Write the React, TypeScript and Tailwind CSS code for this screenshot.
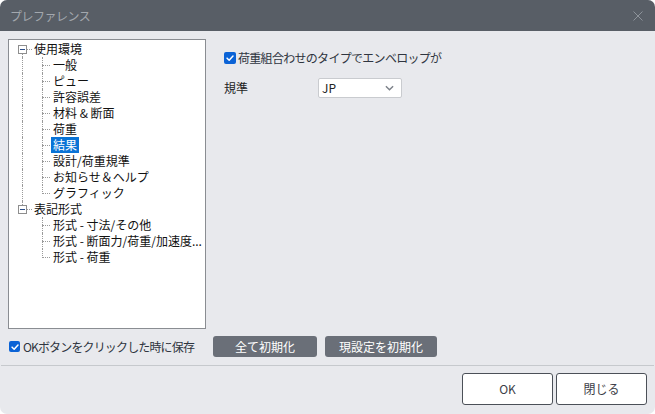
import { FC } from 'react';

type TreeItem = { label: string; children?: string[] };

const tree: TreeItem[] = [
  {
    label: '使用環境',
    children: ['一般', 'ピュー', '許容誤差', '材料 & 断面', '荷重', '結果', '設計/荷重規準', 'お知らせ＆ヘルプ', 'グラフィック'],
  },
  {
    label: '表記形式',
    children: ['形式 - 寸法/その他', '形式 - 断面力/荷重/加速度...', '形式 - 荷重'],
  },
];

const SELECTED = '結果';

const CheckBox: FC<{ size?: string }> = ({ size = 'w-[12px] h-[12px]' }) => (
  <span className={`${size} shrink-0 rounded-[2px] bg-[#0b63d6] flex items-center justify-center`}>
    <svg viewBox="0 0 12 12" className="w-[10px] h-[10px]" fill="none" stroke="white" strokeWidth={1.8} strokeLinecap="round" strokeLinejoin="round">
      <path d="M2.5 6.2 L5 8.6 L9.6 3.6" />
    </svg>
  </span>
);

const RootRow: FC<{ label: string; first: boolean; last: boolean }> = ({ label, first, last }) => (
  <div className="relative h-4 flex items-center pl-[25px]">
    {/* vertical connectors between root nodes */}
    {!first && <span className="absolute left-[13px] top-0 h-[4px] border-l border-dotted border-[#9a9a9a]" />}
    {!last && <span className="absolute left-[13px] top-[13px] h-[3px] border-l border-dotted border-[#9a9a9a]" />}
    <span className="absolute left-[9px] top-[4px] w-[9px] h-[9px] border border-[#8e8e8e] bg-white flex items-center justify-center">
      <span className="w-[5px] h-px bg-[#2d4f8a]" />
    </span>
    <span className="absolute left-[18px] top-[8px] w-[5px] border-t border-dotted border-[#9a9a9a]" />
    <span className="text-[12px] leading-4 text-[#111]">{label}</span>
  </div>
);

const ChildRow: FC<{ label: string; lastChild: boolean; rootContinues: boolean }> = ({ label, lastChild, rootContinues }) => {
  const selected = label === SELECTED;
  return (
    <div className="relative h-4 flex items-center pl-[42px]">
      {rootContinues && <span className="absolute left-[13px] top-0 h-4 border-l border-dotted border-[#9a9a9a]" />}
      <span className={`absolute left-[33px] top-0 border-l border-dotted border-[#9a9a9a] ${lastChild ? 'h-[9px]' : 'h-4'}`} />
      <span className="absolute left-[33px] top-[8px] w-[8px] border-t border-dotted border-[#9a9a9a]" />
      <span
        className={`text-[12px] leading-4 px-[2px] whitespace-nowrap ${
          selected ? 'bg-[#0a74d6] text-white' : 'text-[#111]'
        }`}
      >
        {label}
      </span>
    </div>
  );
};

export default function App() {
  return (
    <div
      className="w-[655px] h-[414px] bg-white"
      style={{ fontFamily: '"Noto Sans CJK JP", "Noto Sans", sans-serif' }}
    >
      <div className="w-full h-full rounded-[7px] overflow-hidden bg-[#e8e9ed] flex flex-col">
        {/* title bar */}
        <div className="h-[31px] shrink-0 bg-[#585e66] flex items-center justify-between pl-[10px] pr-[12px]">
          <span className="text-[12px] text-[#a3a8ae] tracking-[-0.5px]">プレファレンス</span>
          <svg viewBox="0 0 10 10" className="w-[10px] h-[10px]" stroke="#8d939a" strokeWidth={1}>
            <path d="M0.5 0.5 L9.5 9.5 M9.5 0.5 L0.5 9.5" />
          </svg>
        </div>

        {/* body */}
        <div className="flex pt-[8px] pl-[8px]">
          <div className="w-[198px] h-[290px] shrink-0 border border-[#8a8d92] bg-white pt-px">
            {tree.map((node, i) => (
              <div key={node.label}>
                <RootRow label={node.label} first={i === 0} last={i === tree.length - 1} />
                {node.children?.map((c, j) => (
                  <ChildRow
                    key={c}
                    label={c}
                    lastChild={j === node.children!.length - 1}
                    rootContinues={i < tree.length - 1}
                  />
                ))}
              </div>
            ))}
          </div>

          <div className="pl-[18px] pt-[13px] flex flex-col">
            <div className="flex items-center gap-[2px] h-[12px]">
              <CheckBox />
              <span className="text-[12px] leading-4 text-[#2f3540] tracking-[-0.7px]">荷重組合わせのタイプでエンベロップが</span>
            </div>
            <div className="flex items-center mt-[14px]">
              <span className="w-[94px] text-[12px] leading-4 text-[#222]">規準</span>
              <div className="w-[84px] h-[20px] bg-white border border-[#c9cbcf] rounded-[2px] flex items-center justify-between pl-[3px] pr-[7px]">
                <span className="text-[12px] leading-4 text-[#222]">JP</span>
                <svg viewBox="0 0 10 6" className="w-[9px] h-[6px]" fill="none" stroke="#7c8189" strokeWidth={1.6}>
                  <path d="M1 1 L5 5 L9 1" />
                </svg>
              </div>
            </div>
          </div>
        </div>

        {/* save on OK + reset buttons */}
        <div className="flex items-center mt-[7px] pl-[9px] h-[21px]">
          <CheckBox size="w-[11px] h-[11px]" />
          <span className="ml-[3px] w-[190px] text-[12px] leading-4 text-[#2f3540] tracking-[-0.85px] whitespace-nowrap">OKボタンをクリックした時に保存</span>
          <button className="w-[104px] h-[21px] rounded-[3px] bg-[#6a6f78] text-white text-[12px] leading-4">全て初期化</button>
          <button className="ml-[8px] w-[112px] h-[21px] rounded-[3px] bg-[#6a6f78] text-white text-[12px] leading-4">現設定を初期化</button>
        </div>

        <div className="mt-[8px] mx-[1px] h-px bg-[#c6c9cd]" />

        {/* dialog buttons */}
        <div className="flex justify-end gap-[3px] pt-[7px] pr-[8px]">
          <button className="w-[91px] h-[32px] rounded-[3px] bg-white border border-[#4b5058] text-[12px] text-[#3c4048]">OK</button>
          <button className="w-[91px] h-[32px] rounded-[3px] bg-white border border-[#4b5058] text-[12px] text-[#3c4048]">閉じる</button>
        </div>
      </div>
    </div>
  );
}
